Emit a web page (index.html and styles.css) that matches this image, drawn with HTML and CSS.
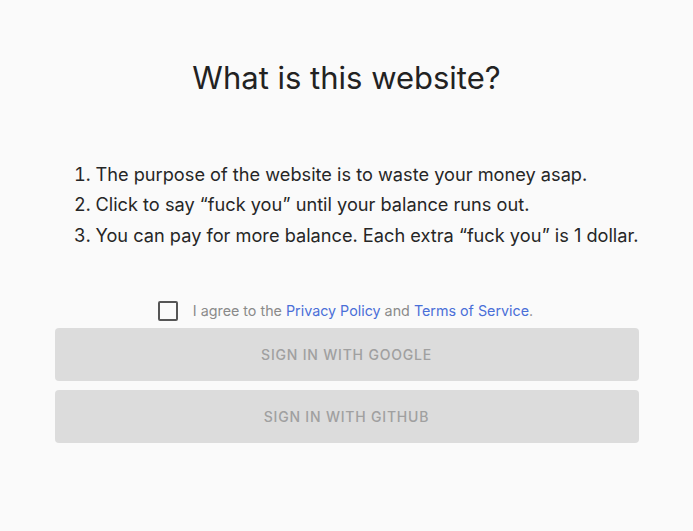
FILE: index.html
```html
<!DOCTYPE html>
<html>
<head>
<meta charset="utf-8">
<link rel="stylesheet" href="styles.css">
</head>
<body>
<main class="page">
  <h1 class="title">What is this website?</h1>
  <ol class="rules">
    <li>The purpose of the website is to waste your money asap.</li>
    <li>Click to say “fuck you” until your balance runs out.</li>
    <li>You can pay for more balance. Each extra “fuck you” is 1 dollar.</li>
  </ol>
  <label class="agree">
    <span class="box"></span>
    <span class="agree-text">I agree to the <a href="#">Privacy Policy</a> and <a href="#">Terms of Service</a>.</span>
  </label>
  <div class="buttons">
    <button class="btn" disabled>Sign in with Google</button>
    <button class="btn" disabled>Sign in with GitHub</button>
  </div>
</main>
</body>
</html>
```
FILE: styles.css
```css
html, body {
  margin: 0;
  padding: 0;
  background: #fafafa;
}
body {
  font-family: Inter, "Noto Sans", sans-serif;
  color: #262626;
}
.page {
  width: 584px;
  margin: 0 auto;
  padding-top: 58px;
}
.title {
  margin: 0;
  text-align: center;
  font-size: 31px;
  font-weight: 400;
  line-height: 40px;
  color: #222;
}
.rules {
  margin: 61px 0 0 0;
  padding-left: 41px;
  font-size: 18.2px;
  line-height: 30.3px;
  color: #262626;
}
.rules li {
  white-space: nowrap;
}
.agree {
  display: flex;
  align-items: center;
  justify-content: center;
  gap: 15px;
  margin-top: 51px;
  font-size: 14.3px;
  color: #8a8a8a;
}
.box {
  width: 16px;
  height: 16px;
  border: 2px solid #555;
  border-radius: 2px;
  margin-left: -2px;
}
.agree-text a {
  color: #4a6fd8;
  text-decoration: none;
}
.buttons {
  display: flex;
  flex-direction: column;
  gap: 9px;
  margin-top: 7px;
}
.btn {
  height: 53px;
  border: none;
  border-radius: 4px;
  background: #dcdcdc;
  color: #a0a0a0;
  font-family: Inter, "Noto Sans", sans-serif;
  font-size: 14px;
  font-weight: 500;
  text-transform: uppercase;
  letter-spacing: 0.8px;
}
```
